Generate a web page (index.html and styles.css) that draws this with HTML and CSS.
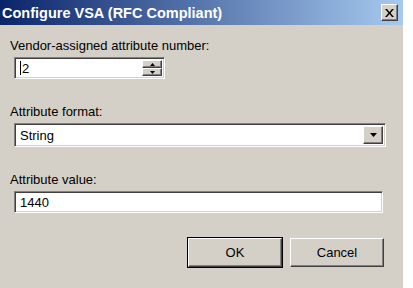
FILE: index.html
```html
<!DOCTYPE html>
<html lang="en">
<head>
<link rel="stylesheet" href="styles.css">
</head>
<body>
<div class="dialog">
  <div class="title-bar">
    <span class="title-text">Configure VSA (RFC Compliant)</span>
    <button class="close-btn" aria-label="Close">
      <svg width="9" height="8" viewBox="0 0 9 8"><path d="M0 0h2l2.5 3 2.5-3h2L5.5 4 9 8H7L4.5 5 2 8H0l3.5-4z" fill="#000"/></svg>
    </button>
  </div>
  <div class="content">
    <label class="field-label">Vendor-assigned attribute number:</label>
    <div class="spinner sunken">
      <span class="value"><span class="caret"></span>2</span>
      <div class="spin-buttons">
        <span class="spin-btn raised"><svg width="5" height="3" viewBox="0 0 5 3"><path d="M2.5 0L5 3H0z" fill="#000"/></svg></span>
        <span class="spin-btn raised"><svg width="5" height="3" viewBox="0 0 5 3"><path d="M0 0h5L2.5 3z" fill="#000"/></svg></span>
      </div>
    </div>

    <label class="field-label">Attribute format:</label>
    <div class="combo sunken">
      <span class="value">String</span>
      <span class="drop-btn raised"><svg width="7" height="4" viewBox="0 0 7 4"><path d="M0 0h7L3.5 4z" fill="#000"/></svg></span>
    </div>

    <label class="field-label">Attribute value:</label>
    <div class="textbox sunken">
      <span class="value">1440</span>
    </div>

    <div class="button-row">
      <button class="btn default-btn">OK</button>
      <button class="btn">Cancel</button>
    </div>
  </div>
</div>
</body>
</html>
```

FILE: styles.css
```css
* {
  box-sizing: border-box;
}
body {
  margin: 0;
  background: #ffffff;
  font-family: "Liberation Sans", Arial, sans-serif;
  font-size: 13px;
  color: #000;
}
.dialog {
  width: 403px;
  height: 288px;
  background: #d4d0c8;
}
.title-bar {
  height: 25px;
  display: flex;
  align-items: center;
  justify-content: space-between;
  padding: 0 5px 0 2px;
  background: linear-gradient(to right, #0a246a, #a6caf0);
}
.title-text {
  color: #ffffff;
  font-weight: bold;
  font-size: 14.5px;
}
.close-btn {
  width: 17px;
  height: 17px;
  padding: 0;
  display: flex;
  align-items: center;
  justify-content: center;
  background: #d4d0c8;
  border: 1px solid;
  border-color: #ffffff #404040 #404040 #ffffff;
  box-shadow: inset -1px -1px 0 #808080;
}
.content {
  display: flex;
  flex-direction: column;
  padding: 14px 17px 0 14px;
}
.field-label {
  margin-left: -4px;
  line-height: 14px;
  margin-bottom: 4px;
}
.sunken {
  background: #ffffff;
  border: 1px solid;
  border-color: #808080 #ffffff #ffffff #808080;
  box-shadow: inset 1px 1px 0 #404040, inset -1px -1px 0 #d4d0c8;
  display: flex;
  align-items: center;
}
.raised {
  background: #d4d0c8;
  border: 1px solid;
  border-color: #ffffff #404040 #404040 #ffffff;
  box-shadow: inset -1px -1px 0 #808080;
  display: flex;
  align-items: center;
  justify-content: center;
}
.value {
  padding-left: 3px;
  display: flex;
  align-items: center;
}
.caret {
  width: 1px;
  height: 14px;
  background: #000;
  margin-right: 1px;
}
.spinner {
  width: 151px;
  height: 22px;
  justify-content: space-between;
  padding: 2px;
  margin-bottom: 26px;
}
.spin-buttons {
  display: flex;
  flex-direction: column;
  width: 20px;
  height: 100%;
}
.spin-btn {
  flex: 1;
}
.combo {
  height: 24px;
  justify-content: space-between;
  padding: 2px;
  margin-bottom: 26px;
}
.drop-btn {
  width: 20px;
  height: 100%;
}
.textbox {
  width: 369px;
  height: 22px;
  padding: 2px;
}
.button-row {
  display: flex;
  justify-content: flex-end;
  gap: 8px;
  margin-top: 25px;
  padding-right: 2px;
}
.btn {
  width: 94px;
  height: 29px;
  font-family: "Liberation Sans", Arial, sans-serif;
  font-size: 13px;
  color: #000;
  background: #d4d0c8;
  border: 1px solid;
  border-color: #ffffff #404040 #404040 #ffffff;
  box-shadow: inset -1px -1px 0 #808080;
  padding: 0;
}
.default-btn {
  outline: 1px solid #000;
}
```
